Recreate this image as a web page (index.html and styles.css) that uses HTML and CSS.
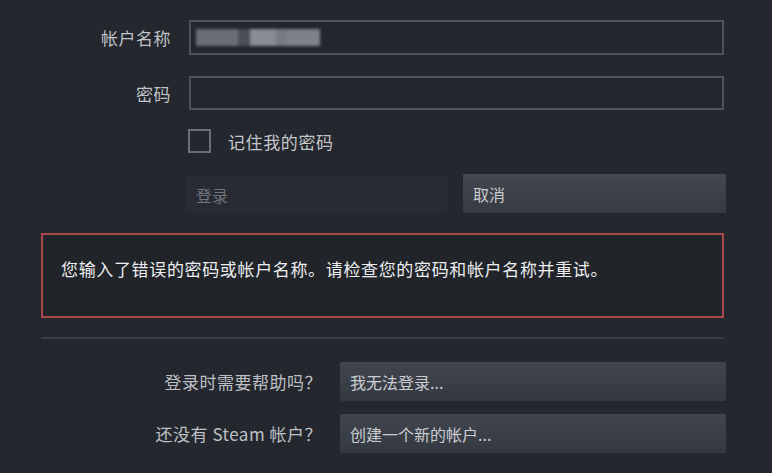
FILE: index.html
```html
<!DOCTYPE html>
<html lang="zh-CN">
<head>
<meta charset="utf-8">
<link rel="stylesheet" href="styles.css">
</head>
<body>
<div class="dialog">
  <div class="field field-account">
    <label class="label">帐户名称</label>
    <div class="input">
      <div class="blurred">
        <span class="b1"></span><span class="b2"></span><span class="b3"></span><span class="b4"></span><span class="b5"></span>
      </div>
    </div>
  </div>
  <div class="field field-password">
    <label class="label">密码</label>
    <div class="input"></div>
  </div>
  <div class="check-row">
    <span class="checkbox"></span>
    <span class="check-label">记住我的密码</span>
  </div>
  <div class="btn-row">
    <div class="btn btn-login">登录</div>
    <div class="btn btn-cancel">取消</div>
  </div>
  <div class="error">您输入了错误的密码或帐户名称。请检查您的密码和帐户名称并重试。</div>
  <div class="sep"></div>
  <div class="help-row help-first">
    <span class="help-label">登录时需要帮助吗？</span>
    <div class="btn btn-help">我无法登录...</div>
  </div>
  <div class="help-row help-second">
    <span class="help-label">还没有 Steam 帐户？</span>
    <div class="btn btn-help">创建一个新的帐户...</div>
  </div>
</div>
</body>
</html>
```

FILE: styles.css
```css
html, body {
  margin: 0;
  padding: 0;
  background: #24272d;
  width: 772px;
  height: 473px;
  overflow: hidden;
}
body {
  font-family: "Noto Sans CJK SC", "Noto Sans", "Liberation Sans", sans-serif;
  color: #b9bcc1;
  text-spacing-trim: space-all;
}
.dialog {
  display: flex;
  flex-direction: column;
  padding: 20px 0 0 41px;
  width: 685px;
}
.field {
  display: grid;
  grid-template-columns: 130px 535px;
  column-gap: 18px;
  align-items: center;
}
.field-account { height: 35px; }
.field-password { height: 34px; margin-top: 21px; }
.label {
  text-align: right;
  font-size: 17px;
  letter-spacing: 0.5px;
  color: #bfc2c7;
  line-height: 1;
}
.input {
  box-sizing: border-box;
  height: 100%;
  border: 2px solid #4e525a;
  background: #23262c;
  display: flex;
  align-items: center;
  padding-left: 5px;
}
.blurred {
  display: flex;
  height: 17px;
  filter: blur(1.6px);
}
.blurred span { display: block; height: 100%; }
.b1 { width: 42px; background: #6a6d74; }
.b2 { width: 12px; background: #4b4e55; }
.b3 { width: 26px; background: #8a8d94; }
.b4 { width: 10px; background: #777a81; }
.b5 { width: 34px; background: #7e8188; }
.check-row {
  display: flex;
  align-items: center;
  margin-top: 19px;
  margin-left: 147px;
  height: 24px;
}
.checkbox {
  box-sizing: border-box;
  width: 23px;
  height: 24px;
  border: 2px solid #6b6e74;
}
.check-label {
  margin-left: 17px;
  font-size: 17px;
  letter-spacing: 0.6px;
  color: #c3c6cb;
}
.btn-row {
  display: flex;
  align-items: flex-end;
  margin-top: 21px;
  margin-left: 145px;
  gap: 16px;
}
.btn {
  box-sizing: border-box;
  display: flex;
  align-items: center;
  font-size: 16px;
  padding-left: 10px;
}
.btn-login {
  width: 261px;
  height: 36px;
  background: #282b33;
  color: #70747c;
}
.btn-cancel {
  width: 263px;
  height: 39px;
  background: linear-gradient(#444851, #363a42);
  color: #c9ccd1;
  border-radius: 1px;
}
.error {
  box-sizing: border-box;
  margin-top: 20px;
  width: 683px;
  height: 85px;
  border: 2px solid #a9494b;
  padding: 22px 0 0 18px;
  font-size: 17px;
  letter-spacing: 0.65px;
  line-height: 24px;
  color: #eceef0;
  background: #212429;
}
.sep {
  margin-top: 19px;
  width: 683px;
  height: 2px;
  background: #393c42;
}
.help-row {
  display: grid;
  grid-template-columns: 281px 386px;
  column-gap: 18px;
  align-items: center;
}
.help-first { margin-top: 23px; height: 39px; }
.help-second { margin-top: 13px; height: 39px; }
.help-label {
  text-align: right;
  font-size: 17px;
  letter-spacing: 0.5px;
  color: #bdc0c5;
}
.btn-help {
  height: 39px;
  background: linear-gradient(#41454e, #343840);
  color: #c9ccd1;
  font-size: 16px;
  border-radius: 2px;
}
```
